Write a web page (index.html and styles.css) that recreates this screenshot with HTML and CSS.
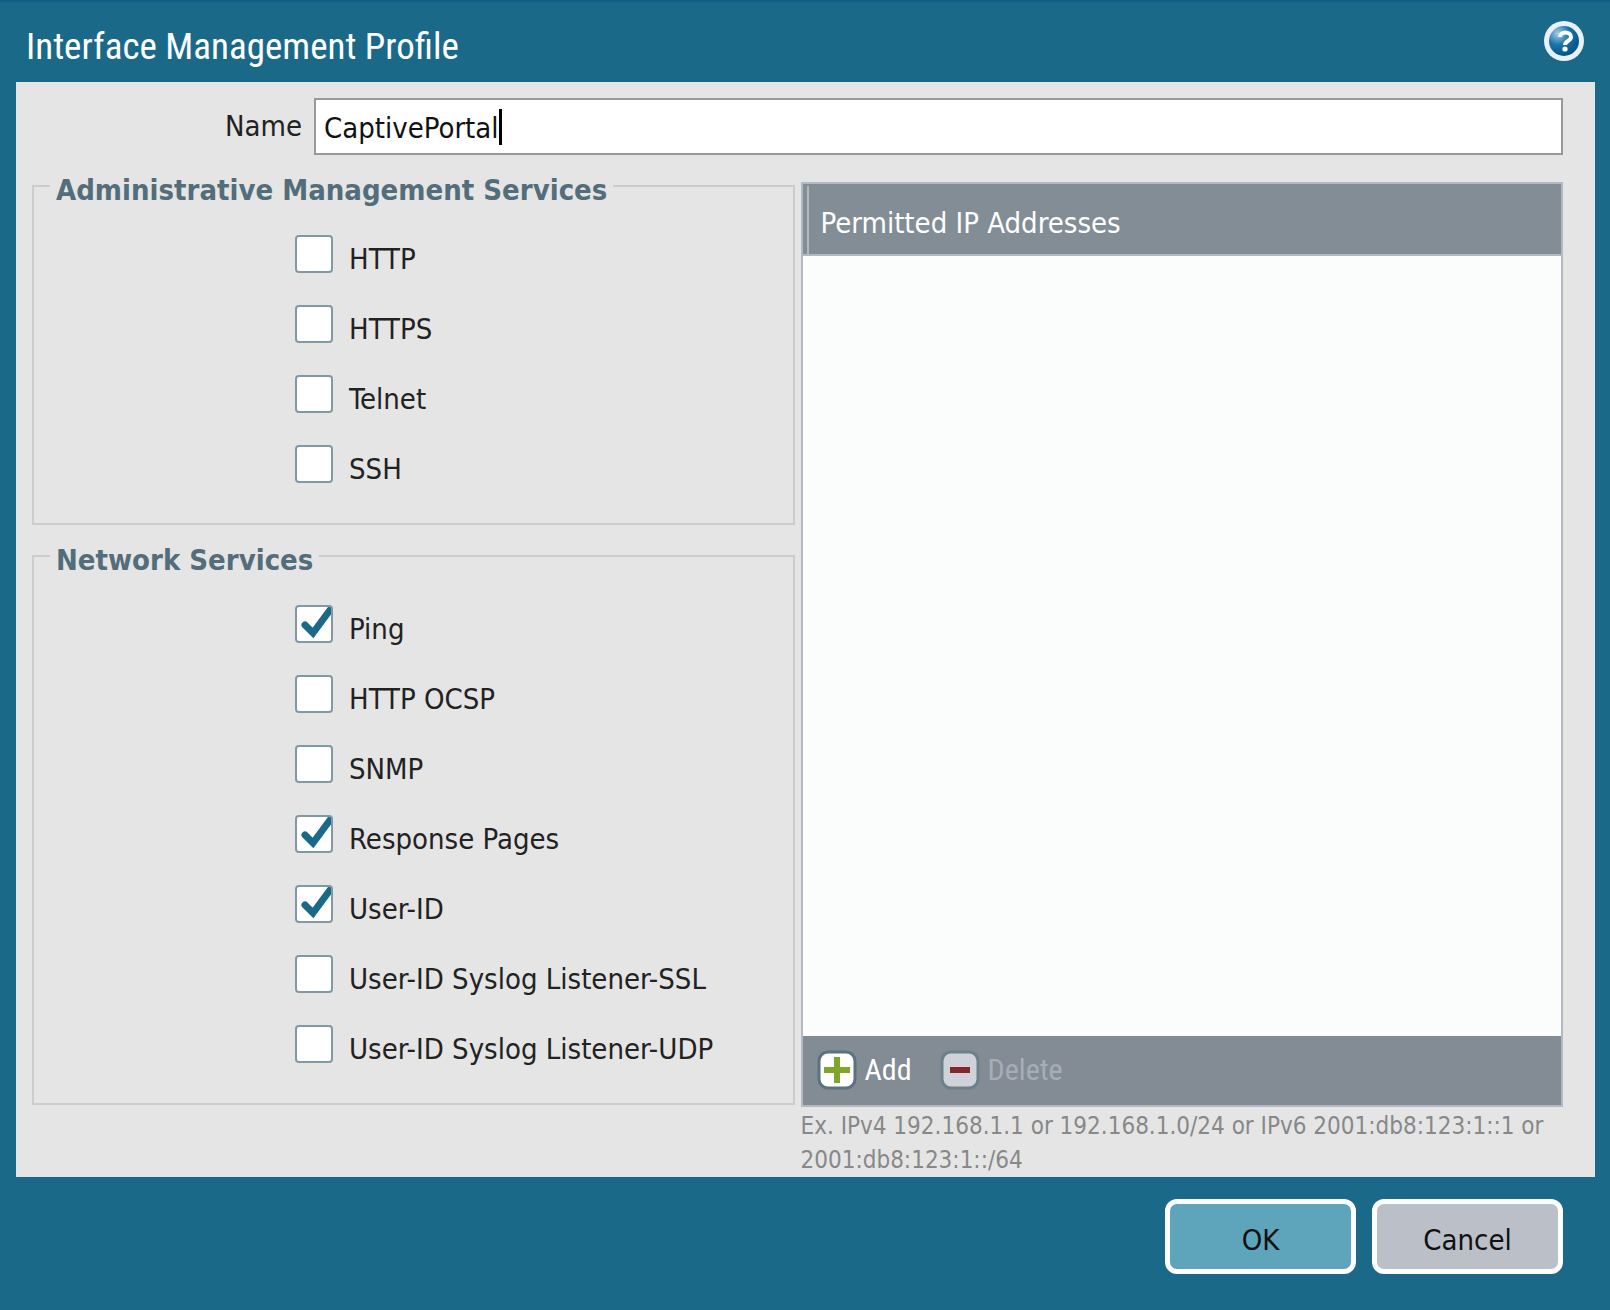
FILE: index.html
```html
<!DOCTYPE html>
<html lang="en">
  <head>
    <meta charset="UTF-8" />
    <meta name="viewport" content="width=device-width, initial-scale=1.0" />
    <title>Interface Management Profile</title>
    <link rel="stylesheet" href="styles.css">
  </head>
  <body>
    <form class="dialog">
      <header class="dialog-header">
        <h1>Interface Management Profile</h1>
        <button type="button" class="help" aria-label="Help">
          <svg viewBox="0 0 42 42" width="42" height="42">
            <defs>
              <radialGradient id="ball" cx="0.3" cy="0.25" r="0.75">
                <stop offset="0" stop-color="#a9cfe6" />
                <stop offset="0.5" stop-color="#1b75a6" />
                <stop offset="1" stop-color="#00578c" />
              </radialGradient>
            </defs>
            <circle cx="21" cy="20" r="20" fill="#e9f0fa" />
            <circle cx="21" cy="20" r="15" fill="url(#ball)" />
            <path d="M17 16c0-6 11-6 11 0 0 4-6 4-6 8" fill="none" stroke="#fff" stroke-width="4" />
            <circle cx="22" cy="28" r="2.6" fill="#fff" />
          </svg>
        </button>
      </header>

      <main class="dialog-body">
        <div class="name-row">
          <label for="name">Name</label>
          <div class="name-box">
            <input type="text" id="name" value="CaptivePortal" size="12">
            <span class="caret"></span>
          </div>
        </div>

        <div class="columns">
          <div class="services">
            <fieldset>
              <legend>Administrative Management Services</legend>
              <label class="check"><input type="checkbox"><span>HTTP</span></label>
              <label class="check"><input type="checkbox"><span>HTTPS</span></label>
              <label class="check"><input type="checkbox"><span>Telnet</span></label>
              <label class="check"><input type="checkbox"><span>SSH</span></label>
            </fieldset>
            <fieldset>
              <legend>Network Services</legend>
              <label class="check"><input type="checkbox" checked><span>Ping</span></label>
              <label class="check"><input type="checkbox"><span>HTTP OCSP</span></label>
              <label class="check"><input type="checkbox"><span>SNMP</span></label>
              <label class="check"><input type="checkbox" checked><span>Response Pages</span></label>
              <label class="check"><input type="checkbox" checked><span>User-ID</span></label>
              <label class="check"><input type="checkbox"><span>User-ID Syslog Listener-SSL</span></label>
              <label class="check"><input type="checkbox"><span>User-ID Syslog Listener-UDP</span></label>
            </fieldset>
          </div>

          <div class="addresses">
            <div class="grid">
              <table>
                <thead>
                  <tr><th scope="col">Permitted IP Addresses</th></tr>
                </thead>
                <tbody></tbody>
              </table>
              <div class="toolbar">
                <button type="button">
                  <svg viewBox="0 0 40 40" width="40" height="40">
                    <rect x="2" y="2" width="36" height="36" rx="9" fill="#fff" stroke="#5b7380" stroke-width="3" />
                    <path d="M20 7v26M7 20h26" stroke="#7fa62b" stroke-width="6" />
                  </svg>
                  Add
                </button>
                <button type="button" disabled>
                  <svg viewBox="0 0 40 40" width="40" height="40">
                    <rect x="2" y="2" width="36" height="36" rx="9" fill="#cfd3d9" stroke="#6c808c" stroke-width="3" />
                    <path d="M10 20h20" stroke="#84262a" stroke-width="6" />
                  </svg>
                  Delete
                </button>
              </div>
            </div>
            <p class="hint">Ex. IPv4 192.168.1.1 or 192.168.1.0/24 or IPv6 2001:db8:123:1::1 or 2001:db8:123:1::/64</p>
          </div>
        </div>
      </main>

      <footer class="dialog-footer">
        <button type="submit" class="btn ok">OK</button>
        <button type="button" class="btn">Cancel</button>
      </footer>
    </form>
  </body>
</html>
```
FILE: styles.css
```css
* {
  box-sizing: border-box;
}
body {
  margin: 0;
  background-color: #1b6989;
  font-family: "DejaVu Sans Condensed", "DejaVu Sans", Tahoma, sans-serif;
  font-size: 29px;
  line-height: 36px;
  color: #222;
}
button,
input {
  font: inherit;
}
.dialog {
  min-height: 100vh;
  padding: 0 15px 0 16px;
  border-top: 2px solid #115f85;
}
.dialog-header {
  display: flex;
  align-items: center;
  justify-content: space-between;
  height: 80px;
  padding: 0 10px;
}
.dialog-header h1 {
  margin: 10px 0 0;
  font-family: "Roboto Condensed", Roboto, "Liberation Sans", sans-serif;
  font-size: 37px;
  font-weight: normal;
  line-height: 48px;
  color: #fff;
}
.help {
  display: flex;
  padding: 0;
  border: 0;
  background: none;
}
.dialog-body {
  padding: 16px 32px 0 16px;
  background-color: #e5e5e5;
}
.name-row {
  display: flex;
  gap: 12px;
}
.name-row label {
  width: 270px;
  padding-top: 10px;
  text-align: right;
}
.name-box {
  display: flex;
  flex: 1;
  align-items: center;
  height: 57px;
  padding-left: 8px;
  border: 2px solid #999;
  background-color: #fff;
}
.name-box input {
  padding: 2px 0 0;
  border: 0;
  outline: 0;
  background: none;
  color: #111;
  field-sizing: content;
}
.caret {
  width: 3px;
  height: 36px;
  background-color: #000;
}
.columns {
  display: grid;
  grid-template-columns: 1fr 1fr;
  gap: 6px;
  padding-top: 9px;
}
.services {
  display: flex;
  flex-direction: column;
  gap: 9px;
  padding-bottom: 72px;
}
fieldset {
  display: flex;
  flex-direction: column;
  gap: 32px;
  margin: 0;
  padding: 27px 0 40px 261px;
  border: 2px solid #ccc;
}
legend {
  margin-left: -245px;
  padding: 8px 6px 0;
  font-weight: bold;
  color: #536d7a;
}
.check {
  display: flex;
  gap: 16px;
  height: 38px;
}
.check input {
  flex: none;
  width: 38px;
  height: 38px;
  margin: 0;
  border: 2px solid #8199a5;
  border-radius: 4px;
  appearance: none;
  background-color: #fff;
}
.check input:checked {
  background-image: url("data:image/svg+xml,%3Csvg xmlns='http://www.w3.org/2000/svg' viewBox='0 0 38 38'%3E%3Cpath d='M10 20l8 8L35 5' fill='none' stroke='%231b6989' stroke-width='7' stroke-linecap='round'/%3E%3C/svg%3E");
  background-origin: border-box;
  background-clip: border-box;
}
.check span {
  padding-top: 6px;
  white-space: nowrap;
}
.addresses {
  display: flex;
  flex-direction: column;
  padding-top: 18px;
}
.grid {
  display: flex;
  flex: 1;
  flex-direction: column;
  justify-content: space-between;
  border: 2px solid #b3b9c3;
  background-color: #fbfdfc;
}
.grid table {
  width: 100%;
  border-spacing: 0;
}
.grid th {
  height: 72px;
  padding: 8px 0 0 18px;
  border-bottom: 2px solid #b3b9c3;
  background: linear-gradient(#b3b9c3, #b3b9c3) 4px 2px / 2px 100% no-repeat #838d96;
  font-weight: normal;
  text-align: left;
  color: #fff;
}
.toolbar {
  display: flex;
  gap: 28px;
  padding: 14px 14px 15px;
  background-color: #838b95;
}
.toolbar button {
  display: flex;
  align-items: center;
  gap: 8px;
  padding: 0;
  border: 0;
  background: none;
  font-family: "Roboto Condensed", Roboto, "Liberation Sans", sans-serif;
  font-size: 30px;
  color: #fff;
}
.toolbar button:disabled {
  color: #a6adb7;
}
.hint {
  margin: 0;
  padding-top: 2px;
  font-size: 24px;
  line-height: 34px;
  color: #888;
}
.dialog-footer {
  display: flex;
  justify-content: flex-end;
  gap: 16px;
  padding: 22px 32px;
}
.btn {
  width: 191px;
  height: 75px;
  padding: 6px 0 0;
  border: 5px solid #fff;
  border-radius: 12px;
  background-color: #bbbfc8;
  color: #111;
}
.btn.ok {
  background-color: #5ea4ba;
}
```
